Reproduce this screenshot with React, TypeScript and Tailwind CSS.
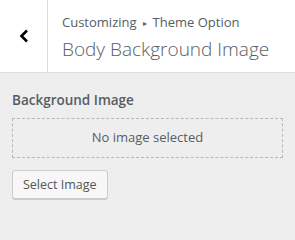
export default function App() {
  return (
    <div className="h-[240px] w-[295px] bg-[#eeeeee] font-['Open_Sans',sans-serif] text-[#555d66]">
      <div className="flex h-[73px] border-b border-[#dddddd] bg-white">
        <button className="flex w-[48px] items-center justify-center border-r border-[#dddddd]">
          <svg width="10" height="14" viewBox="0 0 10 14">
            <path d="M8 1.5 L2.5 7 L8 12.5" fill="none" stroke="#000" strokeWidth="2.6" />
          </svg>
        </button>
        <div className="flex flex-col pl-[14px] pt-[12px]">
          <div className="text-[13px] leading-[20px]">
            Customizing<span className="mx-[6px] text-[8px] align-[1px]">▸</span>Theme Option
          </div>
          <div className="mt-[3px] text-[19px] font-light leading-[26px]">Body Background Image</div>
        </div>
      </div>
      <div className="px-[12px] pt-[17px]">
        <div className="text-[13.5px] font-semibold leading-[20px]">Background Image</div>
        <div className="mt-[8px] flex h-[40px] items-center justify-center border border-dashed border-[#b4b9be] text-[13px]">
          No image selected
        </div>
        <button className="mt-[12px] h-[29px] rounded-[3px] border border-[#cccccc] bg-[#f7f7f7] px-[10px] text-[12.5px] leading-[26px] text-[#555555] shadow-[0_1px_0_#cccccc]">
          Select Image
        </button>
      </div>
    </div>
  )
}
